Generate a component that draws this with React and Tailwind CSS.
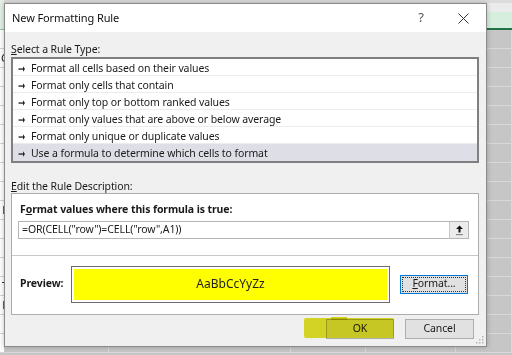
import React from 'react'

const UI = { fontFamily: '"Noto Sans", "Open Sans", sans-serif' }
const RULES = [
  'Format all cells based on their values',
  'Format only cells that contain',
  'Format only top or bottom ranked values',
  'Format only values that are above or below average',
  'Format only unique or duplicate values',
  'Use a formula to determine which cells to format',
]
const COLS = ['w-[105px]', 'w-[182px]', 'w-[75px]', 'w-[90px]', 'flex-1']
const EDGE = { 1: 'C', 9: 'F', 13: 'T', 14: 'L' }

function Arrow() {
  return (
    <svg width="8" height="6" viewBox="0 0 8 6" className="shrink-0">
      <rect x="0.5" y="2.4" width="5" height="1.3" fill="#222" />
      <polygon points="5,0.3 7,3 5,5.7" fill="#222" />
    </svg>
  )
}

function Sheet() {
  return (
    <div className="flex flex-col">
      <div className="h-[12px] flex">
        <div className="w-[4px] bg-[#e4f0e6]" />
        <div className="flex-1 bg-[#ebebeb] border-t-[3px] border-[#dcdcdc]" />
      </div>
      <div className="h-[18px] flex">
        <div className="w-[4px] bg-[#dff0e4] border-b border-[#8fc4a0]" />
        <div className="flex-1 bg-[#d5eedd] border-b-2 border-[#217346]" />
      </div>
      {Array.from({ length: 17 }).map((_, i) => (
        <div key={i} className="h-[19px] flex">
          <div className="w-[4px] bg-white border-b border-[#d4d4d4] overflow-hidden flex justify-end items-center text-[11px] text-[#222]" style={UI}>
            {EDGE[i] && <span className="-mr-[4px]">{EDGE[i]}</span>}
          </div>
          {COLS.map((c, j) => (
            <div key={j} className={`${c} bg-[#c6c6c6] border-b border-r border-[#d9d9d9]`} />
          ))}
        </div>
      ))}
    </div>
  )
}

export default function App() {
  return (
    <div className="relative w-[512px] h-[355px] overflow-hidden bg-[#c6c6c6] text-[#1a1a1a]" style={UI}>
      <Sheet />

      {/* dialog window */}
      <div className="absolute left-[4px] top-[3px] w-[483px] h-[344px] border border-[#8a8a8a] bg-[#f0f0f0] flex flex-col shadow-[0_0_5px_rgba(0,0,0,0.25)]">
        <div className="h-[28px] bg-white flex items-center pl-[7px] shrink-0">
          <span className="text-[11px] tracking-[-0.1px] text-[#111]">New Formatting Rule</span>
          <span className="ml-auto mr-[34px] text-[13px] text-[#555]">?</span>
          <svg width="11" height="11" viewBox="0 0 11 11" className="mr-[17px]">
            <path d="M0.5 0.5 L10.5 10.5 M10.5 0.5 L0.5 10.5" stroke="#333" strokeWidth="1" />
          </svg>
        </div>

        <div className="flex flex-col pl-[6px] pr-[7px] flex-1 text-[10.5px] tracking-[-0.1px]">
          <div className="mt-[9px] h-[14px] leading-[14px] pt-[1px]">
            <span className="underline">S</span>elect a Rule Type:
          </div>
          <div className="mt-[2px] h-[106px] border-2 border-[#7f7f7f] bg-white flex flex-col">
            {RULES.map((r, i) => (
              <div key={r} className={`h-[17px] flex items-center gap-[5px] pl-[5px] pt-[3px] border-b ${i === 5 ? 'bg-[#dedee6] border-transparent' : 'border-[#ececec]'}`}>
                <Arrow />
                <span>{r}</span>
              </div>
            ))}
          </div>

          <div className="mt-[15px] h-[14px] leading-[14px] pt-[1px]">
            <span className="underline">E</span>dit the Rule Description:
          </div>
          <div className="mt-[1px] h-[122px] border border-[#adadad] bg-white flex flex-col">
            <div className="h-[62px] border-b border-[#c8c8c8] flex flex-col pt-[8px]">
              <div className="pl-[8px] h-[14px] leading-[14px] font-bold">
                F<span className="underline">o</span>rmat values where this formula is true:
              </div>
              <div className="mt-[5px] ml-[6px] w-[451px] h-[18px] flex border border-[#b5b5b5]">
                <div className="flex-1 flex items-center pl-[3px]">=OR(CELL("row")=CELL("row",A1))</div>
                <div className="w-[19px] border-l border-[#c8c8c8] bg-[#ececec] flex items-center justify-center">
                  <svg width="9" height="11" viewBox="0 0 9 11">
                    <path d="M4.5 0.5 L1 4 H3.5 V7.5 H5.5 V4 H8 Z" fill="#111" />
                    <rect x="1" y="9" width="7" height="1.2" fill="#888" />
                  </svg>
                </div>
              </div>
            </div>
            <div className="flex-1 flex items-center pl-[8px] pb-[2px]">
              <div className="w-[51px] font-bold">Preview:</div>
              <div className="w-[319px] h-[37px] border border-[#6b6b6b] bg-white p-[2px]">
                <div className="h-full bg-[#ffff00] flex items-center justify-center text-[12px] tracking-normal text-[#222]">AaBbCcYyZz</div>
              </div>
              <div className="ml-[10px] w-[68px] h-[19px] border border-[#0078d7] bg-[#e1e1e1] p-[1px]">
                <div className="h-full border border-dotted border-[#333] flex items-center justify-center">
                  <span className="underline">F</span>ormat...
                </div>
              </div>
            </div>
          </div>

          <div className="mt-[4px] flex justify-end gap-[11px] pr-[5px]">
            <div className="relative">
              <div className="w-[68px] h-[20px] border border-[#adadad] bg-[#e1e1e1] flex items-center justify-center">OK</div>
              <div className="absolute left-[-22px] top-[-1px] w-[90px] h-[20px] bg-[#dede10] opacity-90 mix-blend-multiply rounded-[2px]" />
              <div className="absolute left-[5px] top-[-2px] w-[16px] h-[3px] bg-[#dede10] opacity-90 mix-blend-multiply" />
            </div>
            <div className="w-[69px] h-[20px] border border-[#adadad] bg-[#e1e1e1] flex items-center justify-center">Cancel</div>
          </div>
        </div>

        <svg width="8" height="8" viewBox="0 0 8 8" className="absolute right-[2px] bottom-[2px]">
          {[[6, 0], [3, 3], [6, 3], [0, 6], [3, 6], [6, 6]].map(([x, y]) => (
            <rect key={`${x}-${y}`} x={x} y={y} width="1.5" height="1.5" fill="#b4b4b4" />
          ))}
        </svg>
      </div>
    </div>
  )
}
